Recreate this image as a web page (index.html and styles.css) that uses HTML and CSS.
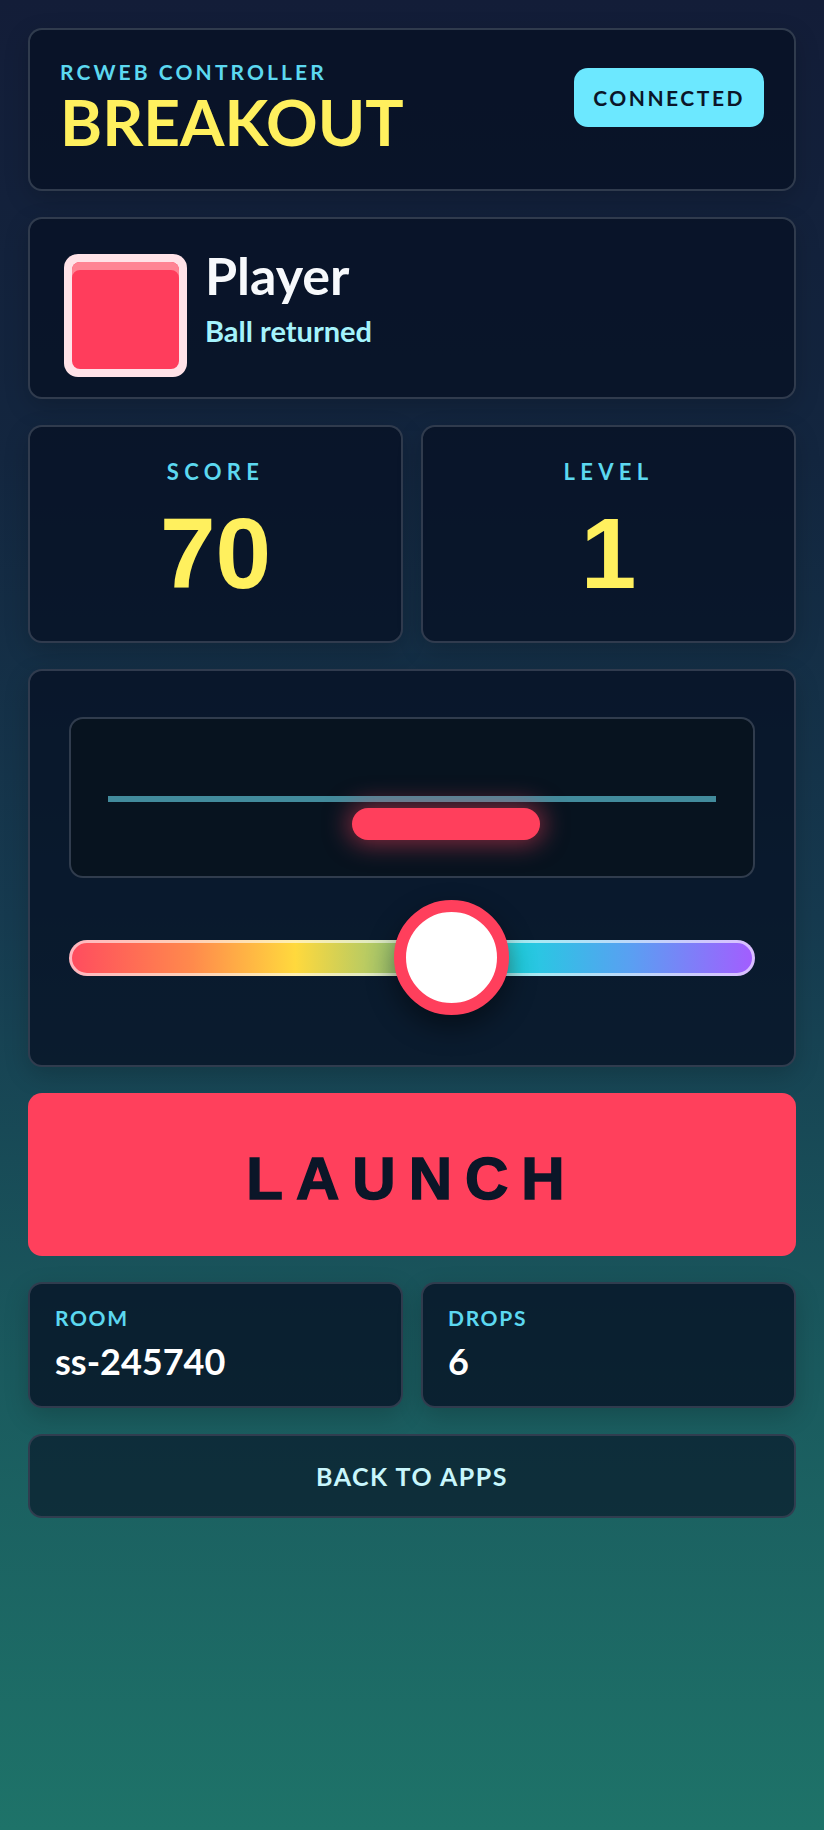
FILE: index.html
```html
<!DOCTYPE html>
<html lang="en">
<head>
    <meta charset="UTF-8">
    <meta name="viewport" content="width=device-width, initial-scale=1.0">
    <title>Breakout Controller</title>
    <link rel="stylesheet" href="styles.css">
</head>
<body>

<div class="app">

    <!-- Header -->
    <header class="card header">
        <div class="title-block">
            <div class="eyebrow">RCWEB CONTROLLER</div>
            <h1 class="title">BREAKOUT</h1>
        </div>
        <span class="status">CONNECTED</span>
    </header>

    <!-- Player -->
    <section class="card player">
        <div class="avatar"><div class="avatar-fill"></div></div>
        <div class="player-info">
            <div class="player-name">Player</div>
            <div class="player-status">Ball returned</div>
        </div>
    </section>

    <!-- Score / Level -->
    <div class="stats">
        <div class="card stat">
            <div class="stat-label">SCORE</div>
            <div class="stat-value">70</div>
        </div>
        <div class="card stat">
            <div class="stat-label">LEVEL</div>
            <div class="stat-value">1</div>
        </div>
    </div>

    <!-- Paddle control -->
    <section class="card pad">
        <div class="court">
            <div class="wall"></div>
            <div class="paddle" style="left: 41.2%"></div>
        </div>
        <div class="slider">
            <div class="track"></div>
            <div class="thumb" style="left: 47.4%"></div>
        </div>
    </section>

    <button class="launch">LAUNCH</button>

    <!-- Room info -->
    <div class="info">
        <div class="card info-box">
            <div class="info-label">ROOM</div>
            <div class="info-value">ss-245740</div>
        </div>
        <div class="card info-box">
            <div class="info-label">DROPS</div>
            <div class="info-value">6</div>
        </div>
    </div>

    <button class="back">BACK TO APPS</button>

</div>

</body>
</html>
```

FILE: styles.css
```css
* {
    margin: 0;
    padding: 0;
    box-sizing: border-box;
}

html {
    min-height: 100%;
    background: linear-gradient(180deg, #131d38 0%, #13263f 25%, #163a4f 50%, #1a5a5e 75%, #1e7369 100%);
}

body {
    font-family: "Lato", sans-serif;
    color: #f7f9fc;
}

.app {
    display: flex;
    flex-direction: column;
    gap: 26px;
    padding: 28px;
}

/* Shared card look */
.card {
    background: rgba(7, 17, 36, 0.78);
    border: 2px solid rgba(51, 62, 80, 0.95);
    border-radius: 14px;
    box-shadow: 0 8px 24px rgba(0, 0, 0, 0.18);
}

/* Header */
.header {
    display: flex;
    justify-content: space-between;
    align-items: flex-start;
    padding: 29px 30px 28px;
}

.eyebrow {
    font-size: 21px;
    font-weight: 700;
    line-height: 1.2;
    letter-spacing: 3.1px;
    color: #5cd8f0;
}

.title {
    font-size: 64px;
    font-weight: 700;
    line-height: 1.2;
    color: #fff05e;
}

.status {
    display: flex;
    align-items: center;
    height: 59px;
    margin-top: 9px;
    padding: 0 19px;
    background: #6ce8ff;
    color: #0b1528;
    border-radius: 14px;
    font-size: 21px;
    font-weight: 700;
    letter-spacing: 0.12em;
}

/* Player */
.player {
    display: flex;
    gap: 18px;
    padding: 35px 34px 20px;
}

.avatar {
    flex-shrink: 0;
    width: 123px;
    height: 123px;
    padding: 8px;
    background: #ffe3e8;
    border-radius: 14px;
}

.avatar-fill {
    width: 100%;
    height: 100%;
    background: #ff3d5c;
    border-radius: 8px;
    box-shadow: inset 0 8px 0 #ff8494;
}

.player-info {
    margin-top: -10px;
}

.player-name {
    font-size: 52px;
    font-weight: 700;
    line-height: 1.2;
    color: #f7f9fc;
}

.player-status {
    margin-top: 8px;
    font-size: 29px;
    font-weight: 700;
    line-height: 1.2;
    color: #a5f3fc;
}

/* Stats */
.stats, .info {
    display: grid;
    grid-template-columns: 1fr 1fr;
    gap: 18px;
}

.stat {
    text-align: center;
    padding: 32px 20px 38px;
}

.stat-label {
    margin-bottom: 18px;
    font-size: 22px;
    font-weight: 700;
    line-height: 1.2;
    letter-spacing: 0.24em;
    color: #5cd8f0;
}

.stat-value {
    font-family: "Liberation Sans", Arial, sans-serif;
    font-size: 100px;
    font-weight: 700;
    line-height: 1;
    color: #fff05e;
}

/* Paddle control */
.pad {
    display: flex;
    flex-direction: column;
    gap: 22px;
    padding: 46px 39px 49px;
}

.court {
    position: relative;
    height: 161px;
    padding: 77px 37px 0;
    background: #07131f;
    border: 2px solid rgba(51, 62, 80, 0.95);
    border-radius: 14px;
}

.wall {
    height: 6px;
    background: #428b9c;
}

.paddle {
    position: absolute;
    top: 89px;
    width: 188px;
    height: 32px;
    background: #ff3f5c;
    border-radius: 16px;
    box-shadow: 0 0 24px 4px rgba(255, 63, 92, 0.5);
}

.slider {
    position: relative;
    display: flex;
    align-items: center;
    height: 116px;
}

.track {
    width: 100%;
    height: 36px;
    border: 3px solid rgba(255, 255, 255, 0.6);
    border-radius: 18px;
    background: linear-gradient(90deg, #ff4b5f 0%, #ff8a4c 18%, #ffd93d 33%, #8cc27a 50%, #22cde0 66%, #5a9ff2 82%, #a45cff 100%) border-box;
}

.thumb {
    position: absolute;
    top: 0;
    width: 115px;
    height: 115px;
    background: #fff;
    border: 12px solid #ff3f5c;
    border-radius: 50%;
    box-shadow: 0 12px 28px rgba(0, 0, 0, 0.45);
}

/* Launch */
.launch {
    width: 100%;
    height: 163px;
    padding-top: 8px;
    background: #ff405c;
    border: none;
    border-radius: 14px;
    font-family: "Liberation Sans", Arial, sans-serif;
    font-size: 60px;
    font-weight: 700;
    letter-spacing: 13px;
    color: #0b1628;
    -webkit-text-stroke: 1.5px #0b1628;
    cursor: pointer;
}

/* Room info */
.info-box {
    padding: 21px 25px 23px;
}

.info-label {
    margin-bottom: 9px;
    font-size: 21px;
    font-weight: 700;
    line-height: 1.2;
    letter-spacing: 0.08em;
    color: #5cd8f0;
}

.info-value {
    font-size: 36px;
    font-weight: 700;
    line-height: 1.2;
    color: #fff;
}

/* Back button */
.back {
    width: 100%;
    height: 84px;
    background: rgba(7, 17, 36, 0.63);
    border: 2px solid rgba(51, 62, 80, 0.95);
    border-radius: 14px;
    font-family: "Lato", sans-serif;
    font-size: 25px;
    font-weight: 700;
    letter-spacing: 0.06em;
    color: #c8f6fc;
    cursor: pointer;
}
```
